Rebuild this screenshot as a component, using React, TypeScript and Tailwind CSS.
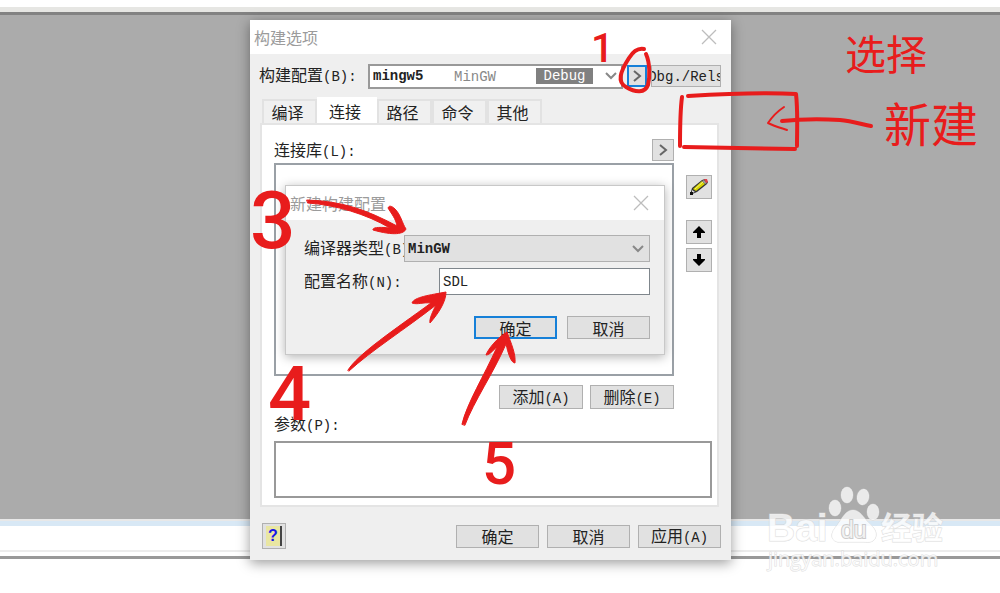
import React, { useState } from 'react';
import clsx from 'clsx';

// Full-width characters are 16px wide, the mono ones beside them about 8px
const Mono: React.FC<{ children: React.ReactNode }> = ({ children }) => (
    <span className="font-['Liberation_Mono',monospace] text-sm leading-5">{children}</span>
);

interface WinButtonProps {
    children: React.ReactNode;
    className?: string;
    focused?: boolean;
    label?: string;
    onClick?: () => void;
}

const WinButton: React.FC<WinButtonProps> = ({ children, className, focused, label, onClick }) => (
    <button
        type="button"
        aria-label={label}
        onClick={onClick}
        className={clsx(
            'flex shrink-0 items-center justify-center overflow-hidden whitespace-nowrap bg-[#e1e1e1]',
            focused ? 'border-2 border-[#1680d8]' : 'border border-[#b0b0b0]',
            className
        )}
    >
        <span>{children}</span>
    </button>
);

const CloseIcon = () => (
    <svg width="16" height="16" viewBox="0 0 16 16" fill="none" stroke="#bdbdbd" strokeWidth="1.3">
        <path d="M1 1L15 15M15 1L1 15" />
    </svg>
);

const ChevronRight = () => (
    <svg width="10" height="12" viewBox="0 0 10 12" fill="none" stroke="#666" strokeWidth="2">
        <path d="M2 1L8 6L2 11" />
    </svg>
);

const ChevronDown = () => (
    <svg width="12" height="8" viewBox="0 0 12 8" fill="none" stroke="#888" strokeWidth="2">
        <path d="M1 1L6 6L11 1" />
    </svg>
);

const PencilIcon = () => (
    <svg width="20" height="18" viewBox="0 0 20 18">
        <path d="M1 17L3 10L13 2L16 1L19 4L18 6L8 14Z" fill="#333" />
        <path d="M4 11L13 3L16 6L7 13Z" fill="#d6d400" />
        <path d="M6 11L14 4" stroke="#f5f07a" strokeWidth="1" />
        <path d="M3 12L6 14L3 15Z" fill="#ddd" />
        <path d="M13 3L15 2L18 5L16 6Z" fill="#999" />
        <path d="M15 1L18 1L19 4L17 5Z" fill="#e0404c" />
        <path d="M1 14H4V17H1Z" fill="#111" />
    </svg>
);

const UpIcon = () => (
    <svg width="12" height="12" viewBox="0 0 12 12">
        <path d="M6 0L12 6V7H8V12H4V7H0V6Z" />
    </svg>
);

const DownIcon = () => (
    <svg width="12" height="12" viewBox="0 0 12 12">
        <path d="M6 12L12 6V5H8V0H4V5H0V6Z" />
    </svg>
);

const tabs = ['编译', '连接', '路径', '命令', '其他'];

const NewConfigDialog: React.FC<{ onClose: () => void }> = ({ onClose }) => {
    const [name, setName] = useState('SDL');

    return (
        <section className="absolute left-[9px] top-5 w-[380px] border border-[#c8c8c8] bg-[#efefef] pb-[15px] shadow-[0_2px_10px_rgba(0,0,0,0.3)]">
            <header className="flex h-[34px] items-center justify-between bg-white pl-1 pr-[15px] text-[#9b9b9b]">
                <h2>新建构建配置</h2>
                <button type="button" aria-label="关闭" onClick={onClose}>
                    <CloseIcon />
                </button>
            </header>
            <form className="pl-[18px] pr-[14px] pt-[15px]">
                <div className="flex h-[27px] items-center">
                    <label htmlFor="compiler" className="w-[100px] shrink-0 overflow-hidden whitespace-nowrap">
                        编译器类型<Mono>(B)</Mono>
                    </label>
                    <div className="relative h-full flex-1">
                        <select
                            id="compiler"
                            className="h-full w-full appearance-none rounded-none border border-[#b0b0b0] bg-[#e1e1e1] px-[3px] font-['Liberation_Mono',monospace] text-sm font-bold"
                        >
                            <option>MinGW</option>
                        </select>
                        <span className="pointer-events-none absolute inset-y-0 right-1.5 flex items-center">
                            <ChevronDown />
                        </span>
                    </div>
                </div>
                <div className="mt-1.5 flex h-[27px] items-center justify-between">
                    <label htmlFor="config-name">
                        配置名称<Mono>(N):</Mono>
                    </label>
                    <input
                        id="config-name"
                        value={name}
                        onChange={(e) => setName(e.target.value)}
                        className="h-full w-[211px] border border-[#7f868c] bg-white px-[3px] font-['Liberation_Mono',monospace] text-sm"
                    />
                </div>
                <div className="mt-[21px] flex justify-end gap-2.5">
                    <WinButton focused className="h-[23px] w-[83px]" onClick={onClose}>
                        确定
                    </WinButton>
                    <WinButton className="h-[23px] w-[83px]" onClick={onClose}>
                        取消
                    </WinButton>
                </div>
            </form>
        </section>
    );
};

const Annotations = () => (
    <svg
        className="pointer-events-none absolute left-0 top-0"
        width="1000"
        height="593"
        viewBox="0 0 1000 593"
        fill="none"
        stroke="#e81c1c"
        strokeLinecap="round"
        strokeLinejoin="round"
    >
        <path strokeWidth="4" d="M644 49C639 48 634 50 629 58C620 72 617 82 626 87C636 93 645 93 648 85C650 77 650 63 646 54" />
        <path strokeWidth="4" d="M682 97C680 112 680 128 680 146M688 96C722 94 760 92 796 94C798 111 797 129 797 146M684 147L795 149" />
        <path strokeWidth="4" d="M782 121C802 119 822 119 840 120C851 121 861 124 871 126" />
        <path strokeWidth="2" d="M784 107C778 111 772 117 768 123C774 126 781 128 787 130" />
        <g fill="#e81c1c" strokeWidth="1">
            <path d="M307 200C342 201 367 210 397 226C396 219 391 213 388 208C389 205 392 206 395 209C401 215 402 223 406 229C404 234 394 236 373 230C372 227 381 227 390 228C366 214 336 205 308 203Z" />
            <path d="M348 370C358 354 394 330 431 303C423 302 418 305 412 303C414 297 430 295 446 292C446 302 438 314 430 323C429 319 433 311 436 305C404 330 372 350 349 371Z" />
            <path d="M462 424C467 403 484 376 497 347C493 350 490 355 486 355C488 349 498 337 507 332C511 343 516 354 515 363C511 363 508 353 506 344C493 374 474 401 465 425Z" />
        </g>
        <g fill="#e81c1c" stroke="none">
            <g className="font-['Roboto',sans-serif] font-medium">
                <text x="591" y="62" fontSize="40">1</text>
                <text x="250" y="248" fontSize="80">3</text>
                <text x="268" y="420" fontSize="76">4</text>
                <text x="482" y="484" fontSize="60">5</text>
            </g>
            <g className="font-['Noto_Sans_CJK_SC',sans-serif] font-normal">
                <text x="845" y="70" fontSize="41">选择</text>
                <text x="884" y="142" fontSize="47">新建</text>
            </g>
        </g>
    </svg>
);

const Watermark = () => (
    <svg
        className="pointer-events-none absolute left-[760px] top-[480px]"
        width="190"
        height="96"
        viewBox="0 0 190 96"
        fill="#fff"
        fillOpacity="0.75"
        stroke="#cfcfcf"
        strokeOpacity="0.7"
        paintOrder="stroke"
    >
        <ellipse cx="75" cy="28" rx="6" ry="8" />
        <ellipse cx="87" cy="15" rx="6" ry="8" />
        <ellipse cx="103" cy="17" rx="6" ry="8" transform="rotate(10 103 17)" />
        <ellipse cx="113" cy="32" rx="6" ry="8" />
        <path d="M93 30C99 30 102 35 107 41C112 46 117 50 116 56C115 62 109 63 104 62H82C76 63 71 60 72 54C73 49 77 46 80 41C84 35 87 30 93 30Z" />
        <g className="font-['Liberation_Sans',sans-serif]">
            <text x="7" y="61" fontSize="39" fontWeight="700">Bai</text>
            <text x="81" y="58" fontSize="23" stroke="#b5b5b5" strokeWidth="2">du</text>
        </g>
        <text className="font-['Noto_Sans_CJK_SC',sans-serif] font-bold" x="121" y="59" fontSize="31">经验</text>
        <text className="font-['Open_Sans',sans-serif] font-medium" x="8" y="86" fontSize="20">jingyan.baidu.com</text>
    </svg>
);

const App: React.FC = () => {
    const [activeTab, setActiveTab] = useState('连接');
    const [showNew, setShowNew] = useState(true);

    return (
        <div className="relative h-screen overflow-hidden bg-white font-['Noto_Sans_CJK_SC',sans-serif] text-base leading-5 text-[#222]">
            {/* Editor window behind the dialog */}
            <div className="flex h-[559px] flex-col">
                <div className="mt-[7px] h-[5px] bg-[#e6e6e3]" />
                <div className="h-[3px] bg-[#828282]" />
                <div className="flex-1 bg-[#ababab]" />
                <div className="h-[7px] border-t-2 border-[#e8e8e8] bg-[#d8e8f5]" />
                <div className="h-[26px] border-b-2 border-[#ececec]" />
                <div className="mt-1 h-[3px] bg-[#999]" />
            </div>

            <main className="absolute left-[250px] top-5 w-[481px] bg-[#efefef] pb-[11px] shadow-[0_3px_12px_rgba(0,0,0,0.4)]">
                <header className="flex h-[34px] items-center justify-between bg-white pl-1 pr-3.5 text-[#9b9b9b]">
                    <h1>构建选项</h1>
                    <button type="button" aria-label="关闭">
                        <CloseIcon />
                    </button>
                </header>

                <div className="flex h-[43px] items-center pl-[9px] pr-2.5">
                    <label htmlFor="config" className="w-[109px] shrink-0">
                        构建配置<Mono>(B):</Mono>
                    </label>
                    <div className="relative h-[25px] flex-1">
                        <select
                            id="config"
                            className="h-full w-full appearance-none rounded-none border-2 border-[#999] bg-white px-[3px] font-['Liberation_Mono',monospace] text-sm font-bold"
                        >
                            <option>mingw5</option>
                        </select>
                        <span className="pointer-events-none absolute inset-y-0 right-1.5 flex items-center">
                            <span className="mr-10 text-[#888]">
                                <Mono>MinGW</Mono>
                            </span>
                            <span className="mr-3 flex h-4 w-[57px] items-center justify-center bg-[#808080] text-white">
                                <Mono>Debug</Mono>
                            </span>
                            <ChevronDown />
                        </span>
                    </div>
                    <WinButton focused label="配置菜单" className="ml-1 mr-1 h-[22px] w-5" onClick={() => setShowNew(true)}>
                        <ChevronRight />
                    </WinButton>
                    <WinButton className="h-[22px] w-[70px]">
                        <Mono>Dbg./Rels</Mono>
                    </WinButton>
                </div>

                <nav className="flex h-[26px] items-end pl-3" role="tablist">
                    {tabs.map((tab) => (
                        <button
                            key={tab}
                            type="button"
                            role="tab"
                            aria-selected={tab === activeTab}
                            onClick={() => setActiveTab(tab)}
                            className={clsx(
                                'border-2 border-b-0 pr-1',
                                tab === activeTab
                                    ? 'h-[26px] w-[60px] border-white bg-white'
                                    : 'h-6 w-[55px] border-[#e2e2e2] bg-[#f0f0f0]'
                            )}
                        >
                            {tab}
                        </button>
                    ))}
                </nav>

                <section className="ml-2.5 mr-3 flex flex-col border-2 border-[#e4e4e4] bg-white pb-[7px] pl-3 pr-[5px] pt-3.5">
                    <div className="flex">
                        <div className="w-[400px]">
                            <div className="flex h-6 items-start justify-between">
                                <span>
                                    连接库<Mono>(L):</Mono>
                                </span>
                                <WinButton label="库菜单" className="h-[22px] w-[22px]">
                                    <ChevronRight />
                                </WinButton>
                            </div>
                            <div className="relative h-[213px] border-2 border-[#9aa0a6]">
                                {showNew && <NewConfigDialog onClose={() => setShowNew(false)} />}
                            </div>
                            <div className="mt-[9px] flex justify-end gap-[7px]">
                                <WinButton className="h-6 w-[84px]">
                                    添加<Mono>(A)</Mono>
                                </WinButton>
                                <WinButton className="h-6 w-[84px]">
                                    删除<Mono>(E)</Mono>
                                </WinButton>
                            </div>
                        </div>
                        <div className="ml-3 flex flex-col gap-1 pt-9">
                            <WinButton label="编辑" className="mb-[17px] h-6 w-[26px]">
                                <PencilIcon />
                            </WinButton>
                            <WinButton label="上移" className="h-6 w-[26px]">
                                <UpIcon />
                            </WinButton>
                            <WinButton label="下移" className="h-6 w-[26px]">
                                <DownIcon />
                            </WinButton>
                        </div>
                    </div>
                    <label htmlFor="params" className="mt-1">
                        参数<Mono>(P):</Mono>
                    </label>
                    <textarea id="params" className="mt-[5px] h-[57px] w-full resize-none border-2 border-[#999] bg-white" />
                </section>

                <footer className="mt-4 flex items-center justify-between pl-3 pr-2.5">
                    <WinButton label="帮助" className="h-[26px] w-6">
                        <span className="flex h-5 w-4 items-center justify-center border-r-2 border-[#444] bg-[#e9e6a2] font-['Liberation_Sans',sans-serif] text-base font-bold text-[#1818e8]">
                            ?
                        </span>
                    </WinButton>
                    <div className="flex gap-2">
                        <WinButton className="h-[23px] w-[83px]">确定</WinButton>
                        <WinButton className="h-[23px] w-[83px]">取消</WinButton>
                        <WinButton className="h-[23px] w-[83px]">
                            应用<Mono>(A)</Mono>
                        </WinButton>
                    </div>
                </footer>
            </main>

            <Watermark />
            <Annotations />
        </div>
    );
};

export default App;
